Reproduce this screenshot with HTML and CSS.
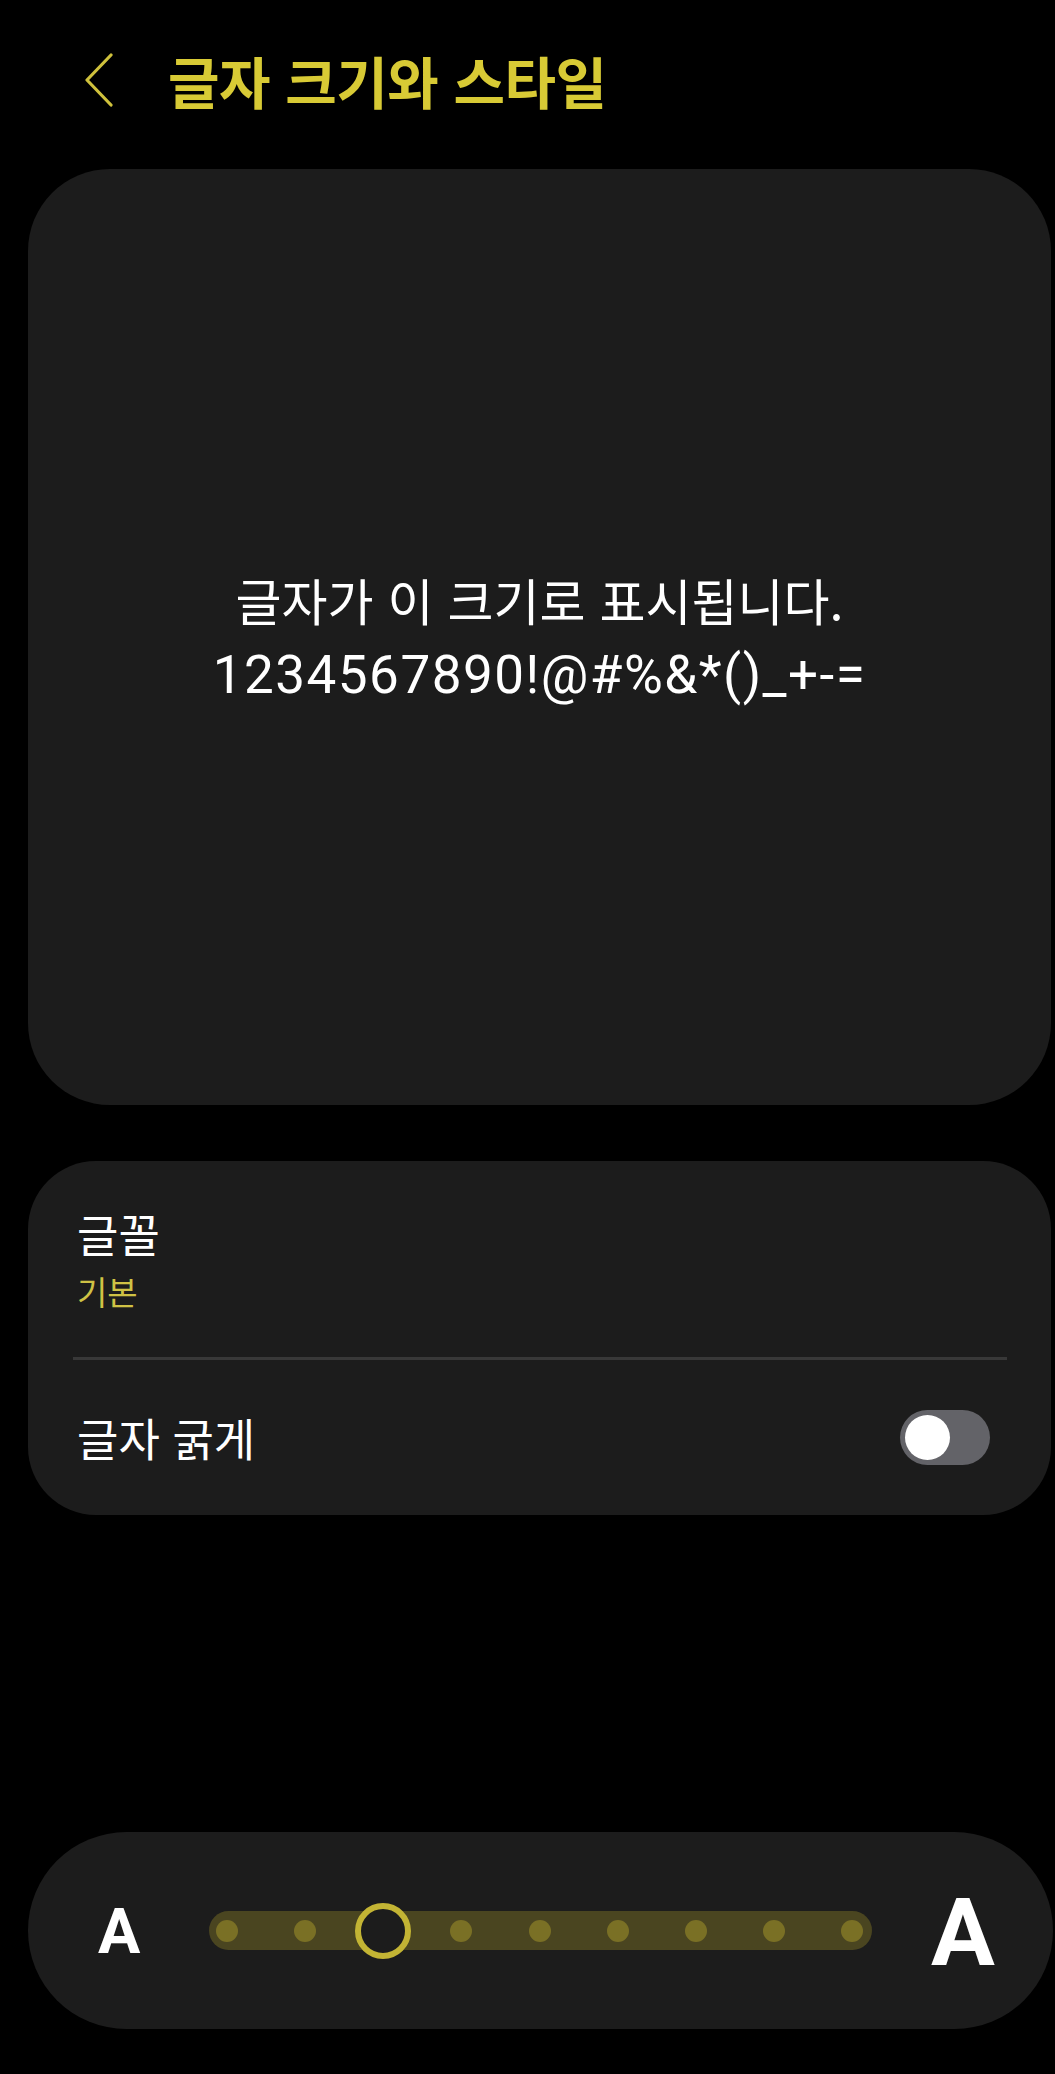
FILE: index.html
```html
<!DOCTYPE html>
<html lang="ko">
<head>
<meta charset="utf-8">
<title>글자 크기와 스타일</title>
<link rel="stylesheet" href="styles.css">
</head>
<body>
<div class="page">
  <header class="header">
    <svg class="back" viewBox="0 0 28 54" width="28" height="54" aria-hidden="true">
      <polyline points="26,2 2,27 26,52" fill="none" stroke="#cfc13c" stroke-width="3.2" stroke-linecap="round" stroke-linejoin="round"/>
    </svg>
    <h1 class="title">글자 크기와 스타일</h1>
  </header>

  <section class="card preview">
    <p class="preview-line">글자가 이 크기로 표시됩니다.</p>
    <p class="preview-line latin">1234567890!@#%&amp;*()_+-=</p>
  </section>

  <section class="card options">
    <div class="row row-font">
      <div class="row-text">
        <div class="row-title">글꼴</div>
        <div class="row-sub">기본</div>
      </div>
    </div>
    <div class="divider"></div>
    <div class="row row-bold">
      <div class="row-title">글자 굵게</div>
      <div class="toggle"><div class="thumb"></div></div>
    </div>
  </section>

  <div class="spacer"></div>

  <section class="card slider">
    <span class="a-small">A</span>
    <div class="track">
      <span class="stop"></span>
      <span class="stop"></span>
      <span class="stop active"></span>
      <span class="stop"></span>
      <span class="stop"></span>
      <span class="stop"></span>
      <span class="stop"></span>
      <span class="stop"></span>
      <span class="stop"></span>
    </div>
    <span class="a-large">A</span>
  </section>
</div>
</body>
</html>
```

FILE: styles.css
```css
html, body {
  margin: 0;
  padding: 0;
  background: #000;
}
body {
  width: 1055px;
  height: 2074px;
  overflow: hidden;
  font-family: "Noto Sans CJK KR", "Noto Sans", sans-serif;
  color: #fff;
}
.page {
  display: flex;
  flex-direction: column;
  height: 2074px;
}
.header {
  height: 159px;
  padding-bottom: 10px;
  padding-left: 85px;
  display: flex;
  align-items: center;
  gap: 55px;
  box-sizing: content-box;
}
.back {
  display: block;
  flex: none;
}
.title {
  margin: 0;
  font-size: 56px;
  font-weight: 700;
  color: #d8ca35;
  letter-spacing: -0.5px;
  line-height: 1;
}
.card {
  background: #1c1c1c;
  margin-left: 28px;
  margin-right: 4px;
}
.preview {
  height: 936px;
  border-radius: 82px;
  display: flex;
  flex-direction: column;
  align-items: center;
  justify-content: center;
}
.preview-line {
  margin: 0;
  font-size: 50px;
  line-height: 76px;
  font-weight: 400;
  text-align: center;
}
.preview-line.latin {
  font-family: "Roboto", "Noto Sans CJK KR", sans-serif;
  font-weight: 400;
  font-size: 53px;
  letter-spacing: 1.5px;
}
.options {
  margin-top: 56px;
  height: 354px;
  border-radius: 68px;
  display: flex;
  flex-direction: column;
}
.row {
  display: flex;
  align-items: center;
  padding-left: 49px;
  padding-right: 61px;
}
.row-font {
  height: 196px;
}
.row-bold {
  flex: 1;
  justify-content: space-between;
}
.row-title {
  font-size: 45px;
  line-height: 54px;
}
.row-sub {
  font-size: 33px;
  line-height: 40px;
  color: #cfc245;
  margin-top: 10px;
}
.divider {
  height: 3px;
  background: #383838;
  margin: 0 44px 0 45px;
}
.toggle {
  width: 90px;
  height: 55px;
  border-radius: 28px;
  background: #636368;
  box-sizing: border-box;
  padding: 5px;
  display: flex;
  align-items: center;
}
.thumb {
  width: 45px;
  height: 45px;
  border-radius: 50%;
  background: #fff;
}
.spacer {
  height: 317px;
  flex: none;
}
.slider {
  height: 197px;
  margin-right: 2px;
  border-radius: 99px;
  display: flex;
  align-items: center;
  padding-left: 70px;
  box-sizing: border-box;
}
.a-small, .a-large {
  font-family: "Roboto", "Liberation Sans", sans-serif;
  font-weight: 700;
  color: #fff;
  line-height: 1;
}
.a-small {
  font-size: 63px;
  width: 42px;
  margin-top: 2px;
}
.a-large {
  font-size: 95px;
  width: 64px;
  margin-left: 59px;
  margin-top: 4px;
}
.track {
  margin-left: 69px;
  width: 663px;
  height: 39px;
  border-radius: 20px;
  background: #4a4520;
  display: flex;
  align-items: center;
  justify-content: space-between;
  padding: 0 9px 0 7px;
  box-sizing: border-box;
}
.stop {
  width: 22px;
  height: 22px;
  border-radius: 50%;
  background: #7a7025;
  flex: none;
}
.stop.active {
  width: 56px;
  height: 56px;
  margin: 0 -17px;
  background: #1c1c1c;
  border: 6px solid #c3b434;
  box-sizing: border-box;
}
```
